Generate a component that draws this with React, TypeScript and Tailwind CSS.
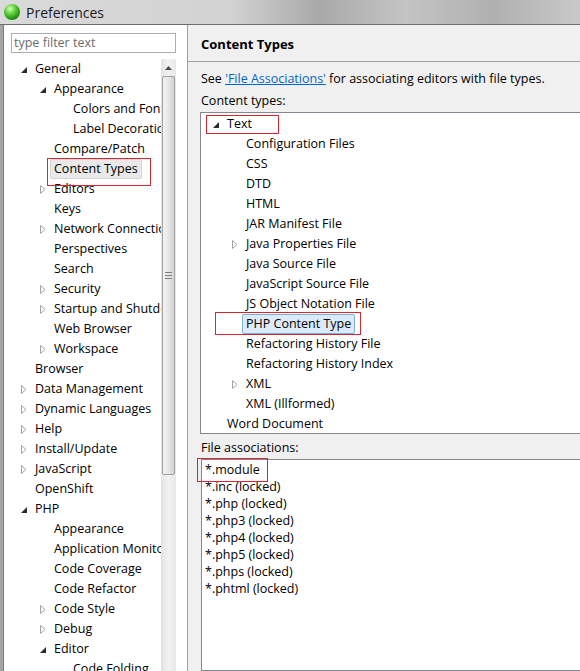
import React from 'react';

type Node = { label: string; level: number; state?: 'open' | 'closed' };

const prefTree: Node[] = [
  { label: 'General', level: 0, state: 'open' },
  { label: 'Appearance', level: 1, state: 'open' },
  { label: 'Colors and Fonts', level: 2 },
  { label: 'Label Decorations', level: 2 },
  { label: 'Compare/Patch', level: 1 },
  { label: 'Content Types', level: 1 },
  { label: 'Editors', level: 1, state: 'closed' },
  { label: 'Keys', level: 1 },
  { label: 'Network Connections', level: 1, state: 'closed' },
  { label: 'Perspectives', level: 1 },
  { label: 'Search', level: 1 },
  { label: 'Security', level: 1, state: 'closed' },
  { label: 'Startup and Shutdown', level: 1, state: 'closed' },
  { label: 'Web Browser', level: 1 },
  { label: 'Workspace', level: 1, state: 'closed' },
  { label: 'Browser', level: 0 },
  { label: 'Data Management', level: 0, state: 'closed' },
  { label: 'Dynamic Languages', level: 0, state: 'closed' },
  { label: 'Help', level: 0, state: 'closed' },
  { label: 'Install/Update', level: 0, state: 'closed' },
  { label: 'JavaScript', level: 0, state: 'closed' },
  { label: 'OpenShift', level: 0 },
  { label: 'PHP', level: 0, state: 'open' },
  { label: 'Appearance', level: 1 },
  { label: 'Application Monitor', level: 1 },
  { label: 'Code Coverage', level: 1 },
  { label: 'Code Refactor', level: 1 },
  { label: 'Code Style', level: 1, state: 'closed' },
  { label: 'Debug', level: 1, state: 'closed' },
  { label: 'Editor', level: 1, state: 'open' },
  { label: 'Code Folding', level: 2 },
];

const typeTree: Node[] = [
  { label: 'Text', level: 0, state: 'open' },
  { label: 'Configuration Files', level: 1 },
  { label: 'CSS', level: 1 },
  { label: 'DTD', level: 1 },
  { label: 'HTML', level: 1 },
  { label: 'JAR Manifest File', level: 1 },
  { label: 'Java Properties File', level: 1, state: 'closed' },
  { label: 'Java Source File', level: 1 },
  { label: 'JavaScript Source File', level: 1 },
  { label: 'JS Object Notation File', level: 1 },
  { label: 'PHP Content Type', level: 1 },
  { label: 'Refactoring History File', level: 1 },
  { label: 'Refactoring History Index', level: 1 },
  { label: 'XML', level: 1, state: 'closed' },
  { label: 'XML (Illformed)', level: 1 },
  { label: 'Word Document', level: 0 },
];

const files = ['*.module', '*.inc (locked)', '*.php (locked)', '*.php3 (locked)', '*.php4 (locked)', '*.php5 (locked)', '*.phps (locked)', '*.phtml (locked)'];

function Twisty({ state }: { state?: 'open' | 'closed' }) {
  if (state === 'open')
    return (
      <svg width="6" height="6" viewBox="0 0 6 6" className="mt-[1px]">
        <path d="M6 0 L6 6 L0 6 Z" fill="#2b2b2b" />
      </svg>
    );
  if (state === 'closed')
    return (
      <svg width="6" height="9" viewBox="0 0 6 9">
        <path d="M0.5 0.5 L5 4.5 L0.5 8.5 Z" fill="none" stroke="#a3a3a3" />
      </svg>
    );
  return null;
}

function Row({ node, base, selected }: { node: Node; base: number; selected?: 'gray' | 'blue' }) {
  const sel =
    selected === 'gray'
      ? 'bg-[#e9e9e9] border border-[#d6d6d6] rounded-[2px] px-[3px] -ml-[4px]'
      : selected === 'blue'
      ? 'bg-[#dcebfc] border border-[#84acdd] rounded-[2px] px-[3px] -ml-[4px]'
      : '';
  return (
    <div className="flex h-[20px] items-center whitespace-nowrap" style={{ paddingLeft: base + node.level * 19 }}>
      <span className="flex w-[14px] shrink-0 items-center">
        <Twisty state={node.state} />
      </span>
      <span className={`leading-[18px] ${sel}`}>{node.label}</span>
    </div>
  );
}

function RedBox({ className }: { className: string }) {
  return <div className={`pointer-events-none absolute border-[1.5px] border-[#d4282e] ${className}`} />;
}

export default function App() {
  return (
    <div
      className="relative h-[671px] w-[580px] overflow-hidden bg-[#f0f0f0] text-[12.5px] text-black"
      style={{ fontFamily: '"Open Sans", "Noto Sans", sans-serif' }}
    >
      {/* title bar */}
      <div className="flex h-[24px] items-center gap-[6px] bg-[linear-gradient(90deg,#dadada_0%,#d2d2d2_40%,#a9a9a9_55%,#c4c4c4_70%,#b0b0b0_85%,#c9c9c9_100%)] pl-[4px]">
        <div className="h-[16px] w-[16px] rounded-full bg-[radial-gradient(circle_at_38%_30%,#d9ffb8_0%,#5fd03a_35%,#1f8f12_70%,#0f4d08_100%)]" />
        <span className="text-[14px] text-[#1a1a1a]">Preferences</span>
      </div>
      <div className="h-px bg-[#6d6d6d]" />

      <div className="flex h-[646px]">
        <div className="w-[3px] shrink-0 bg-[#a5a5a5]" />
        <div className="w-px shrink-0 bg-[#7a7a7a]" />

        {/* left pane */}
        <div className="flex w-[183px] shrink-0 flex-col bg-white">
          <div className="pl-[7px] pt-[8px]">
            <div className="flex h-[20px] w-[165px] items-center border border-[#abadb3] pl-[2px] text-[#6d6d6d]">
              type filter text
            </div>
          </div>
          <div className="mt-[5px] flex flex-1 overflow-hidden">
            <div className="w-[157px] shrink-0 overflow-hidden pt-px">
              {prefTree.map((n, i) => (
                <Row key={i} node={n} base={17} selected={n.label === 'Content Types' ? 'gray' : undefined} />
              ))}
            </div>
            <div className="mt-[1px] flex w-[15px] shrink-0 flex-col bg-[linear-gradient(90deg,#e3e3e3,#f2f2f2_50%,#e8e8e8)]">
              <div className="flex h-[17px] items-center justify-center">
                <svg width="7" height="4" viewBox="0 0 7 4">
                  <path d="M0 4 L3.5 0 L7 4 Z" fill="#4a4a4a" />
                </svg>
              </div>
              <div className="mx-[1px] flex h-[399px] items-center justify-center rounded-[2px] border border-[#a0a0a0] bg-[linear-gradient(90deg,#f4f4f4,#e6e6e6_50%,#d4d4d4)]">
                <div className="flex flex-col gap-[2px]">
                  <div className="h-px w-[7px] bg-[#7d7d7d]" />
                  <div className="h-px w-[7px] bg-[#7d7d7d]" />
                  <div className="h-px w-[7px] bg-[#7d7d7d]" />
                </div>
              </div>
            </div>
            <div className="w-[11px]" />
          </div>
        </div>
        <div className="w-px shrink-0 bg-[#a0a0a0]" />

        {/* right pane */}
        <div className="flex min-w-0 flex-1 flex-col overflow-hidden">
          <div className="flex h-[37px] shrink-0 items-center border-b border-[#a0a0a0] pl-[13px] pt-[4px] text-[13px] font-bold">
            Content Types
          </div>
          <div className="mt-[7px] flex h-[20px] items-center whitespace-nowrap pl-[13px]">
            See&nbsp;<span className="text-[#0066cc] underline">'File Associations'</span>&nbsp;for associating editors with file types.
          </div>
          <div className="mt-[2px] flex h-[20px] items-center pl-[13px]">Content types:</div>
          <div className="ml-[12px] mt-[1px] h-[322px] w-[420px] shrink-0 border border-[#828790] bg-white pt-px">
            {typeTree.map((n, i) => (
              <Row key={i} node={n} base={12} selected={n.label === 'PHP Content Type' ? 'blue' : undefined} />
            ))}
          </div>
          <div className="mt-[4px] flex h-[20px] items-center pl-[13px]">File associations:</div>
          <div className="ml-[13px] mt-[1px] w-[420px] flex-1 shrink-0 border border-[#828790] bg-white pl-[3px] pt-[2px]">
            {files.map((f) => (
              <div key={f} className="flex h-[17px] items-center">{f}</div>
            ))}
          </div>
        </div>
      </div>

      {/* annotation boxes */}
      <RedBox className="left-[47px] top-[158px] h-[28px] w-[104px]" />
      <RedBox className="left-[206px] top-[115px] h-[19px] w-[73px]" />
      <RedBox className="left-[215px] top-[312px] h-[23px] w-[146px]" />
      <RedBox className="left-[197px] top-[458px] h-[24px] w-[71px]" />
    </div>
  );
}
